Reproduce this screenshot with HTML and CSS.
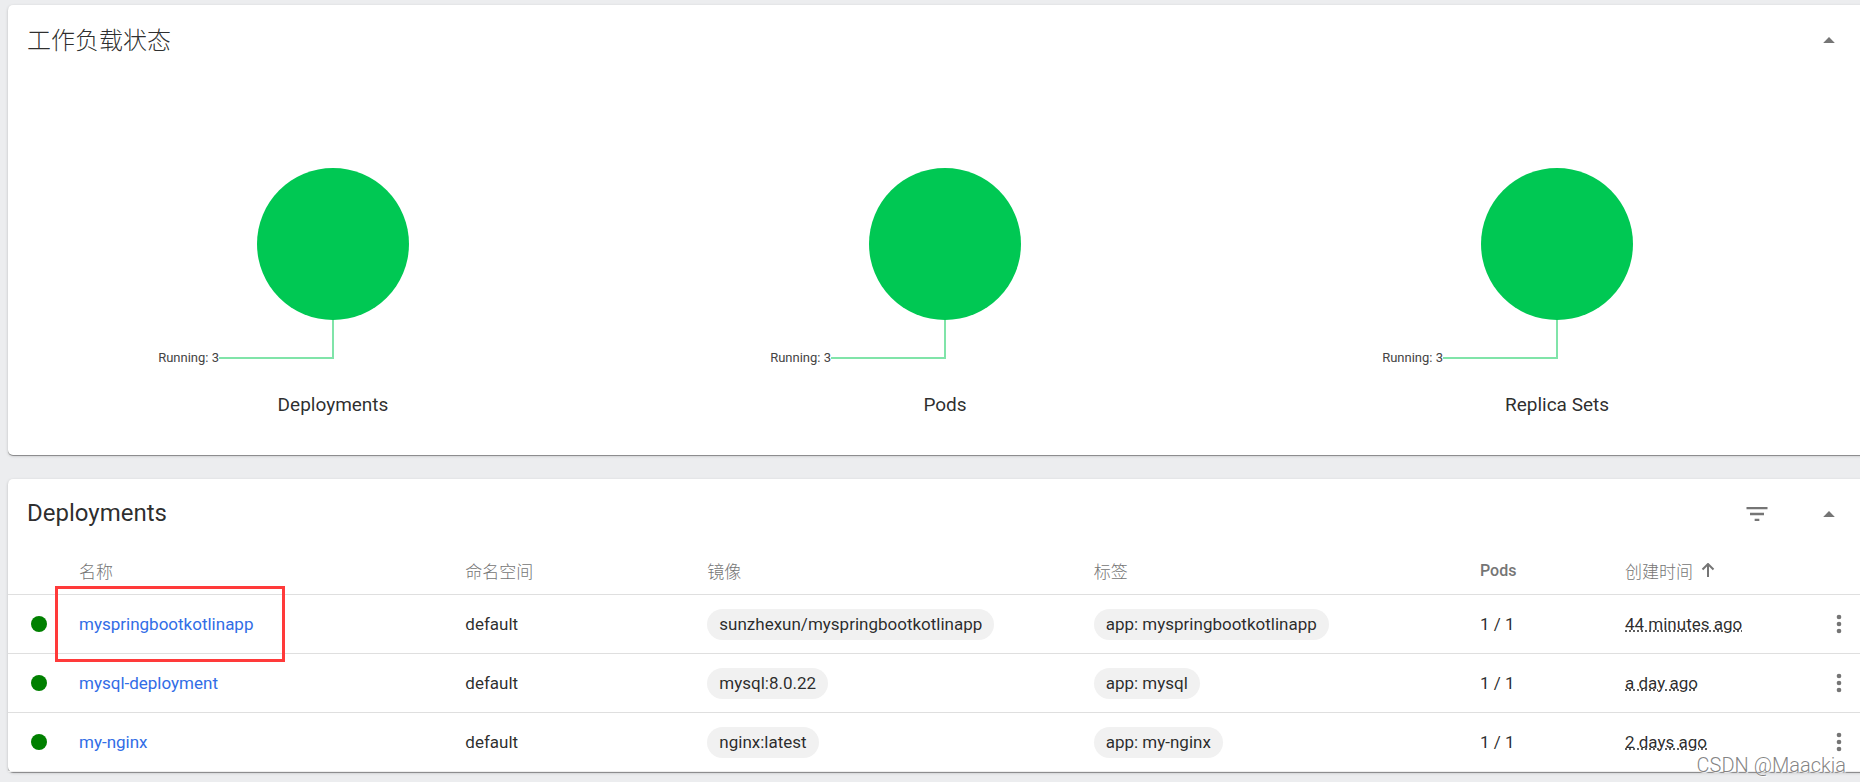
FILE: index.html
```
<!DOCTYPE html>
<html lang="zh-CN">
<head>
<meta charset="utf-8">
<title>工作负载</title>
<link rel="stylesheet" href="styles.css">
</head>
<body>
<main class="content">
  <section class="card status-card">
    <header class="card-header">
      <h2 class="card-title">工作负载状态</h2>
      <button class="icon-button" type="button" aria-label="收起">
        <svg class="icon" viewBox="0 0 24 24"><path d="M7 14.5l5-5 5 5z"/></svg>
      </button>
    </header>
    <div class="charts">
      <figure class="chart">
        <svg class="pie" viewBox="0 0 360 200" role="img" aria-label="Deployments">
          <path class="leader" d="M180 152V190H66"/>
          <circle class="slice" cx="180" cy="76" r="76"/>
          <text class="pie-label" x="66" y="194" text-anchor="end">Running: 3</text>
        </svg>
        <figcaption class="chart-name">Deployments</figcaption>
      </figure>
      <figure class="chart">
        <svg class="pie" viewBox="0 0 360 200" role="img" aria-label="Pods">
          <path class="leader" d="M180 152V190H66"/>
          <circle class="slice" cx="180" cy="76" r="76"/>
          <text class="pie-label" x="66" y="194" text-anchor="end">Running: 3</text>
        </svg>
        <figcaption class="chart-name">Pods</figcaption>
      </figure>
      <figure class="chart">
        <svg class="pie" viewBox="0 0 360 200" role="img" aria-label="Replica Sets">
          <path class="leader" d="M180 152V190H66"/>
          <circle class="slice" cx="180" cy="76" r="76"/>
          <text class="pie-label" x="66" y="194" text-anchor="end">Running: 3</text>
        </svg>
        <figcaption class="chart-name">Replica Sets</figcaption>
      </figure>
    </div>
  </section>

  <section class="card">
    <header class="card-header">
      <h2 class="card-title">Deployments</h2>
      <button class="icon-button" type="button" aria-label="筛选">
        <svg class="icon icon-large" viewBox="0 0 24 24"><path d="M10 18h4v-2h-4v2zM3 6v2h18V6H3zm3 7h12v-2H6v2z"/></svg>
      </button>
      <button class="icon-button" type="button" aria-label="收起">
        <svg class="icon" viewBox="0 0 24 24"><path d="M7 14.5l5-5 5 5z"/></svg>
      </button>
    </header>
    <table class="table">
      <colgroup>
        <col class="col-status"><col><col class="col-namespace"><col><col>
        <col class="col-pods"><col class="col-created"><col class="col-menu">
      </colgroup>
      <thead>
        <tr>
          <th></th><th>名称</th><th>命名空间</th><th>镜像</th><th>标签</th><th>Pods</th>
          <th><span class="sort">创建时间<svg class="sort-arrow" viewBox="0 0 14 16"><path d="M7 14V1M1.500 6.500L7 1l5.500 5.500"/></svg></span></th>
          <th></th>
        </tr>
      </thead>
      <tbody>
        <tr>
          <td class="status"><span class="dot"></span></td>
          <td class="marked"><a class="link" href="#">myspringbootkotlinapp</a></td>
          <td>default</td>
          <td><span class="chip">sunzhexun/myspringbootkotlinapp</span></td>
          <td><span class="chip">app: myspringbootkotlinapp</span></td>
          <td>1 / 1</td>
          <td><span class="time">44 minutes ago</span></td>
          <td class="menu"><button class="icon-button" type="button" aria-label="菜单"><svg class="icon icon-large" viewBox="0 0 24 24"><circle cx="12" cy="6" r="2"/><circle cx="12" cy="12" r="2"/><circle cx="12" cy="18" r="2"/></svg></button></td>
        </tr>
        <tr>
          <td class="status"><span class="dot"></span></td>
          <td><a class="link" href="#">mysql-deployment</a></td>
          <td>default</td>
          <td><span class="chip">mysql:8.0.22</span></td>
          <td><span class="chip">app: mysql</span></td>
          <td>1 / 1</td>
          <td><span class="time">a day ago</span></td>
          <td class="menu"><button class="icon-button" type="button" aria-label="菜单"><svg class="icon icon-large" viewBox="0 0 24 24"><circle cx="12" cy="6" r="2"/><circle cx="12" cy="12" r="2"/><circle cx="12" cy="18" r="2"/></svg></button></td>
        </tr>
        <tr>
          <td class="status"><span class="dot"></span></td>
          <td><a class="link" href="#">my-nginx</a></td>
          <td>default</td>
          <td><span class="chip">nginx:latest</span></td>
          <td><span class="chip">app: my-nginx</span></td>
          <td>1 / 1</td>
          <td><span class="time">2 days ago</span></td>
          <td class="menu"><button class="icon-button" type="button" aria-label="菜单"><svg class="icon icon-large" viewBox="0 0 24 24"><circle cx="12" cy="6" r="2"/><circle cx="12" cy="12" r="2"/><circle cx="12" cy="18" r="2"/></svg></button></td>
        </tr>
      </tbody>
    </table>
  </section>
</main>
<div class="watermark">CSDN @Maackia</div>
</body>
</html>
```
FILE: styles.css
```
*,
*::after {
  box-sizing: border-box;
}

body {
  margin: 0;
  overflow: hidden;
  background: #ecedef;
  color: rgba(0, 0, 0, 0.84);
  font-family: Roboto, "Noto Sans CJK SC", sans-serif;
  font-size: 17px;
}

/* The cards run past the right edge of the window. */
.content {
  display: flex;
  flex-direction: column;
  gap: 24px;
  margin-right: -22px;
  padding: 5px 0 8px 8px;
}

.card {
  background: #fff;
  border-radius: 5px;
  box-shadow: 0 1px 0 rgba(0, 0, 0, 0.3), 0 1px 3px rgba(0, 0, 0, 0.22);
}

.card-header {
  display: flex;
  align-items: center;
  gap: 24px;
  height: 70px;
  padding: 0 29px 0 19px;
}

.card-title {
  flex: 1;
  margin: 0;
  padding-bottom: 3px;
  font-size: 24px;
  font-weight: 400;
}

.card-title:lang(zh-CN) {
  font-family: Roboto, "Noto Sans CJK SC Light", "Noto Sans CJK SC", sans-serif;
}

.icon-button {
  display: flex;
  align-items: center;
  justify-content: center;
  width: 48px;
  height: 48px;
  padding: 0;
  border: 0;
  background: none;
  color: #757575;
}

.icon {
  width: 28px;
  height: 28px;
  fill: currentColor;
}

.charts {
  display: grid;
  grid-template-columns: repeat(3, 1fr);
  padding: 93px 19px 38px;
}

.chart {
  display: flex;
  flex-direction: column;
  align-items: center;
  gap: 25px;
  margin: 0;
}

.pie {
  width: 360px;
  height: 200px;
}

.slice {
  fill: #00c853;
}

.leader {
  fill: none;
  stroke: #80e4a9;
  stroke-width: 2;
}

.pie-label {
  fill: #444;
  font-size: 13px;
}

.chart-name {
  font-size: 19px;
  line-height: 24px;
}

.table {
  width: 100%;
  border-collapse: separate;
  border-spacing: 0;
  table-layout: fixed;
}

.col-status {
  width: 71px;
}

.col-namespace {
  width: 242px;
}

.col-pods {
  width: 145px;
}

.col-created {
  width: 171px;
}

.col-menu {
  width: 86px;
}

.table th {
  height: 46px;
  padding: 0 0 2px;
  border-bottom: 1px solid #dfdfdf;
  color: #757575;
  font-size: 17px;
  font-weight: 300;
  text-align: left;
}

.table th:nth-child(6) {
  font-size: 16px;
  font-weight: 500;
}

.table td {
  height: 59px;
  padding: 0;
  border-bottom: 1px solid #dfdfdf;
}

.table tr:last-child td {
  border-bottom-color: #eee;
}

.table .status {
  padding-left: 23px;
}

.dot {
  display: block;
  width: 16px;
  height: 16px;
  border-radius: 50%;
  background: #008000;
}

.marked {
  position: relative;
}

.marked::after {
  content: "";
  position: absolute;
  top: -9px;
  left: -24px;
  width: 230px;
  height: 76px;
  border: 3px solid #ff3a3a;
}

.link {
  color: #326de6;
  text-decoration: none;
}

.chip {
  display: inline-block;
  padding: 0 12px;
  border-radius: 16px;
  background: #f1f1f1;
  line-height: 31px;
}

.sort {
  display: flex;
  align-items: center;
  gap: 8px;
}

.sort-arrow {
  width: 14px;
  height: 16px;
  fill: none;
  stroke: #757575;
  stroke-width: 2;
}

.time {
  text-decoration: underline dotted;
}

.menu .icon-button {
  margin: 0 auto;
}

.watermark {
  position: absolute;
  right: 14px;
  bottom: 5px;
  color: rgba(110, 110, 110, 0.85);
  font-size: 20px;
  font-weight: 300;
  line-height: 24px;
  text-shadow: 1px 1px 1px #fff;
}
```
